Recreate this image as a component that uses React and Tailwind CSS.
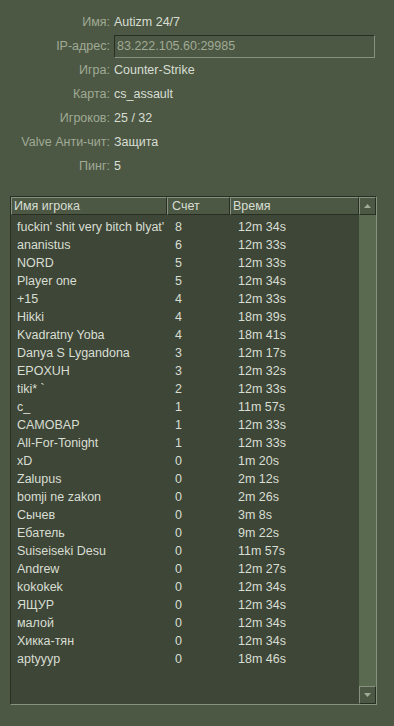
import React from 'react'

const INFO = [
  ['Имя', 'Autizm 24/7'],
  ['IP-адрес', '83.222.105.60:29985', true],
  ['Игра', 'Counter-Strike'],
  ['Карта', 'cs_assault'],
  ['Игроков', '25 / 32'],
  ['Valve Анти-чит', 'Защита'],
  ['Пинг', '5'],
]

const PLAYERS = [
  ["fuckin' shit very bitch blyat'", 8, '12m 34s'],
  ['ananistus', 6, '12m 33s'],
  ['NORD', 5, '12m 33s'],
  ['Player one', 5, '12m 34s'],
  ['+15', 4, '12m 33s'],
  ['Hikki', 4, '18m 39s'],
  ['Kvadratny Yoba', 4, '18m 41s'],
  ['Danya S Lygandona', 3, '12m 17s'],
  ['EPOXUH', 3, '12m 32s'],
  ['tiki* `', 2, '12m 33s'],
  ['c_', 1, '11m 57s'],
  ['CAMOBAP', 1, '12m 33s'],
  ['All-For-Tonight', 1, '12m 33s'],
  ['xD', 0, '1m 20s'],
  ['Zalupus', 0, '2m 12s'],
  ['bomji ne zakon', 0, '2m 26s'],
  ['Сычев', 0, '3m 8s'],
  ['Ебатель', 0, '9m 22s'],
  ['Suiseiseki Desu', 0, '11m 57s'],
  ['Andrew', 0, '12m 27s'],
  ['kokokek', 0, '12m 34s'],
  ['ЯЩУР', 0, '12m 34s'],
  ['малой', 0, '12m 34s'],
  ['Хикка-тян', 0, '12m 34s'],
  ['aptyyyp', 0, '18m 46s'],
]

const raised = 'border border-t-[#889180] border-l-[#889180] border-r-[#292e23] border-b-[#292e23] bg-[#4c5844]'
const sunken = 'border border-t-[#292e23] border-l-[#292e23] border-r-[#889180] border-b-[#889180]'

export default function App() {
  return (
    <div
      className="w-[394px] h-[726px] bg-[#4c5844] flex flex-col text-[12.5px] leading-[18px] overflow-hidden"
      style={{ fontFamily: '"Liberation Sans", "DejaVu Sans", sans-serif' }}
    >
      {/* Server info */}
      <div className="flex flex-col pt-[10px]">
        {INFO.map(([label, value, field]) => (
          <div key={label} className="flex items-center h-[24px]">
            <div className="w-[110px] text-right text-[#a0aa95] whitespace-nowrap">{label}:</div>
            {field ? (
              <div className={`ml-[4px] w-[261px] h-[23px] flex items-center pl-[2px] ${sunken} text-[#a0aa95]`}>
                {value}
              </div>
            ) : (
              <div className="ml-[4px] text-[#d8ded3]">{value}</div>
            )}
          </div>
        ))}
      </div>

      {/* Player list */}
      <div className={`mt-[18px] ml-[10px] w-[367px] h-[509px] flex ${sunken} bg-[#3e4637]`}>
        <div className="flex-1 flex flex-col">
          <div className="flex h-[18px] text-[#d8ded3]">
            <div className={`w-[156px] flex items-center pl-[2px] ${raised}`}>Имя игрока</div>
            <div className={`w-[63px] flex items-center pl-[4px] ${raised}`}>Счет</div>
            <div className={`flex-1 flex items-center pl-[2px] ${raised}`}>Время</div>
          </div>
          <div className="flex flex-col pt-[3px] text-[#d8ded3]">
            {PLAYERS.map(([name, score, time], i) => (
              <div key={i} className="flex h-[18px]">
                <div className="w-[158px] pl-[6px] whitespace-nowrap">{name}</div>
                <div className="w-[63px] pl-[6px]">{score}</div>
                <div className="flex-1 pl-[6px]">{time}</div>
              </div>
            ))}
          </div>
        </div>
        <div className="w-[17px] flex flex-col bg-[#5a6a50]">
          <div className={`h-[18px] flex items-center justify-center ${raised}`}>
            <svg width="7" height="4" viewBox="0 0 7 4"><path d="M3.5 0 L7 4 L0 4 Z" fill="#a0aa95" /></svg>
          </div>
          <div className="flex-1" />
          <div className={`h-[18px] flex items-center justify-center ${raised}`}>
            <svg width="7" height="4" viewBox="0 0 7 4"><path d="M0 0 L7 0 L3.5 4 Z" fill="#a0aa95" /></svg>
          </div>
        </div>
      </div>
    </div>
  )
}
